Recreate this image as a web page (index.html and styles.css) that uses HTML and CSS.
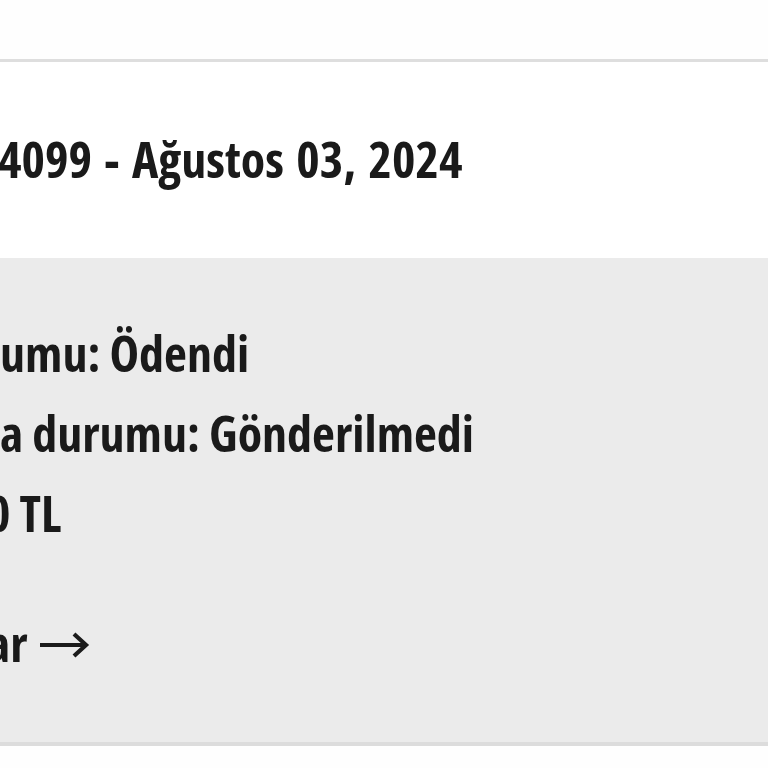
FILE: index.html
```html
<!DOCTYPE html>
<html lang="tr">
<head>
<meta charset="utf-8">
<link rel="stylesheet" href="styles.css">
</head>
<body>
<div class="topbar"></div>
<section class="order">
  <header class="order-head">
    <h2 class="order-title">4099 - Ağustos 03, 2024</h2>
  </header>
  <div class="order-body">
    <p class="line">umu: Ödendi</p>
    <p class="line">a durumu: Gönderilmedi</p>
    <p class="line line-total">0 TL</p>
    <a class="more" href="#">ar<svg class="arrow" width="52" height="28" viewBox="0 0 52 28" aria-hidden="true"><path d="M2 14 H48 M36 3 L48 14 L36 25" fill="none" stroke="#1b1b1b" stroke-width="4.2" stroke-linecap="butt" stroke-linejoin="miter"/></svg></a>
  </div>
</section>
</body>
</html>
```
FILE: styles.css
```css
html, body {
  margin: 0;
  padding: 0;
  background: #fefefe;
  overflow: hidden;
}
body {
  font-family: "Open Sans", "DejaVu Sans", sans-serif;
  font-stretch: 75%;
  font-weight: 700;
  color: #1a1a1a;
  width: 768px;
  height: 768px;
}
.topbar {
  height: 59px;
  background: #fefefe;
}
.order {
  border-top: 3px solid #dedede;
  border-bottom: 4px solid #dcdcdc;
}
.order-head {
  height: 196px;
  background: #ffffff;
  display: flex;
  align-items: flex-start;
}
.order-title {
  margin: 0 0 0 -2px;
  padding-top: 67px;
  font-size: 50px;
  line-height: 60px;
  font-weight: 700;
  word-spacing: 3.5px;
  white-space: nowrap;
}
.order-body {
  background: #ebebeb;
  height: 484px;
  padding-top: 55px;
  box-sizing: border-box;
}
.line {
  margin: 0;
  font-size: 50px;
  line-height: 80px;
  white-space: nowrap;
}
.line-total {
  text-indent: -13px;
}
.more {
  display: flex;
  align-items: center;
  gap: 10px;
  margin: 50px 0 0 -13px;
  font-size: 50px;
  line-height: 80px;
  color: #1a1a1a;
  text-decoration: none;
  white-space: nowrap;
}
.arrow {
  display: block;
  margin-top: 4px;
}
```
